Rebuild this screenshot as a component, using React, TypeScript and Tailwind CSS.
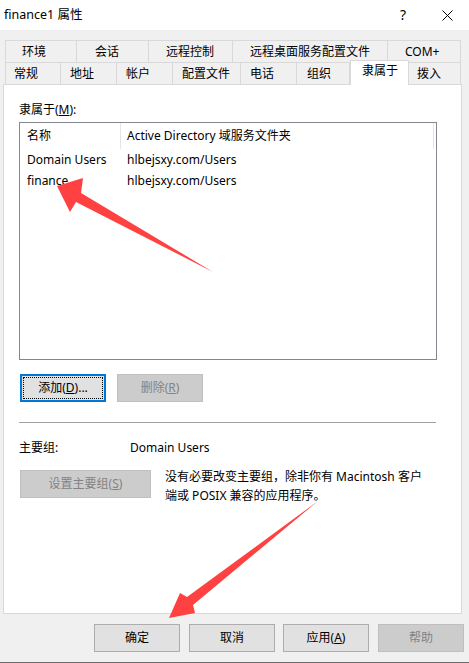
import * as React from 'react';

const row1 = [
  { label: '环境', w: 'w-[72px] border-l pl-[16px]' },
  { label: '会话', w: 'w-[72px] pl-[18px]' },
  { label: '远程控制', w: 'w-[84px] pl-[17px]' },
  { label: '远程桌面服务配置文件', w: 'w-[155px] pl-[17px]' },
  { label: 'COM+', w: 'w-[73px] pl-[17px]' },
];

const row2 = [
  { label: '常规', w: 'w-[56px] border-l pl-[8px]' },
  { label: '地址', w: 'w-[56px] pl-[9px]' },
  { label: '帐户', w: 'w-[56px] pl-[9px]' },
  { label: '配置文件', w: 'w-[68px] pl-[9px]' },
  { label: '电话', w: 'w-[56px] pl-[9px]' },
  { label: '组织', w: 'w-[53px] pl-[10px]' },
  { label: '隶属于', w: 'w-[59px] pl-[11px]', active: true },
  { label: '拨入', w: 'w-[52px] pl-[8px]' },
];

const members = [
  { name: 'Domain Users', folder: 'hlbejsxy.com/Users' },
  { name: 'finance', folder: 'hlbejsxy.com/Users' },
];

function Btn({
  children,
  disabled,
  focused,
  className = '',
}: {
  children: React.ReactNode;
  disabled?: boolean;
  focused?: boolean;
  className?: string;
}) {
  if (focused) {
    return (
      <div className={`h-[28px] border-2 border-[#0078d7] bg-[#e1e1e1] p-px ${className}`}>
        <div className="flex h-full w-full items-center justify-center border border-dotted border-black">
          {children}
        </div>
      </div>
    );
  }
  return (
    <div
      className={`flex h-[28px] items-center justify-center border ${
        disabled ? 'border-[#bfbfbf] bg-[#cccccc] text-[#838383]' : 'border-[#adadad] bg-[#e1e1e1] text-black'
      } ${className}`}
    >
      {children}
    </div>
  );
}

function Arrows() {
  return (
    <svg className="pointer-events-none absolute inset-0" width={469} height={663} viewBox="0 0 469 663">
      <polygon
        points="57,186 83,178 81,193 213,272 76,202 70,212"
        fill="#ff4141"
      />
      <polygon
        points="169,618 180,593 187,597 318,501 193,605 195,613"
        fill="#ff4141"
      />
    </svg>
  );
}

export default function App() {
  return (
    <div className="relative flex h-[663px] w-[469px] flex-col overflow-hidden bg-[#f0f0f0] font-[family-name:'Noto_Sans','Noto_Sans_CJK_SC',sans-serif] text-[12px] leading-[16px] text-black">
      {/* title bar */}
      <div className="flex h-[30px] items-center bg-white pl-[4px]">
        <span className="text-[12.5px]">finance1 属性</span>
        <span className="ml-auto mr-[36px] text-[14px]">?</span>
        <svg width="11" height="11" viewBox="0 0 11 11" className="mr-[16px]">
          <path d="M0.5 0.5 L10.5 10.5 M10.5 0.5 L0.5 10.5" stroke="#000" strokeWidth="1" />
        </svg>
      </div>

      {/* tabs */}
      <div className="pl-[5px] pt-[10px]">
        <div className="flex h-[22px]">
          {row1.map((t) => (
            <div key={t.label} className={`flex items-center border-r border-t border-[#d9d9d9] ${t.w}`}>
              {t.label}
            </div>
          ))}
        </div>
        <div className="flex h-[22px] items-start">
          {row2.map((t) =>
            t.active ? (
              <div
                key={t.label}
                className={`relative z-10 -mt-[2px] h-[25px] border-l border-r border-t border-[#d9d9d9] bg-white pt-[2px] ${t.w}`}
              >
                {t.label}
              </div>
            ) : (
              <div key={t.label} className={`flex h-[22px] items-center border-r border-t border-[#d9d9d9] ${t.w}`}>
                {t.label}
              </div>
            )
          )}
        </div>
      </div>

      {/* panel */}
      <div className="ml-[3px] h-[530px] w-[459px] border border-[#d9d9d9] bg-white pl-[15px] pt-[17px]">
        <div>
          隶属于(<span className="underline">M</span>):
        </div>
        <div className="mt-[4px] h-[238px] w-[418px] border border-[#828790]">
          <div className="flex h-[26px] items-center">
            <div className="flex h-full w-[101px] items-center border-r border-[#e5e5e5] pl-[7px]">名称</div>
            <div className="flex h-full w-[313px] items-center border-r border-[#e5e5e5] pl-[6px]">
              Active Directory 域服务文件夹
            </div>
          </div>
          {members.map((m) => (
            <div key={m.name} className="flex h-[21px] items-center">
              <div className="w-[101px] pl-[7px]">{m.name}</div>
              <div className="pl-[6px]">{m.folder}</div>
            </div>
          ))}
        </div>

        <div className="ml-[1px] mt-[14px] flex gap-[11px]">
          <Btn focused className="w-[86px]">
            添加(<span className="underline">D</span>)...
          </Btn>
          <Btn disabled className="w-[86px]">
            删除(<span className="underline">R</span>)
          </Btn>
        </div>

        <div className="mt-[20px] h-px w-[417px] bg-[#a0a0a0]" />

        <div className="mt-[17px] flex">
          <span className="w-[111px]">主要组:</span>
          <span>Domain Users</span>
        </div>

        <div className="ml-[1px] mt-[14px] flex items-start gap-[14px]">
          <Btn disabled className="w-[131px] shrink-0">
            设置主要组(<span className="underline">S</span>)
          </Btn>
          <div className="-mt-[3px] w-[280px] leading-[19px]">
            没有必要改变主要组，除非你有 Macintosh 客户
            <br />
            端或 POSIX 兼容的应用程序。
          </div>
        </div>
      </div>

      {/* dialog buttons */}
      <div className="mt-[10px] flex pl-[94px]">
        <Btn className="w-[86px]">确定</Btn>
        <Btn className="ml-[9px] w-[86px]">取消</Btn>
        <Btn className="ml-[8px] w-[86px]">
          应用(<span className="underline">A</span>)
        </Btn>
        <Btn disabled className="ml-[9px] w-[86px]">
          帮助
        </Btn>
      </div>

      <div className="mt-auto h-px bg-[#6b6b6b]" />

      <Arrows />
    </div>
  );
}
